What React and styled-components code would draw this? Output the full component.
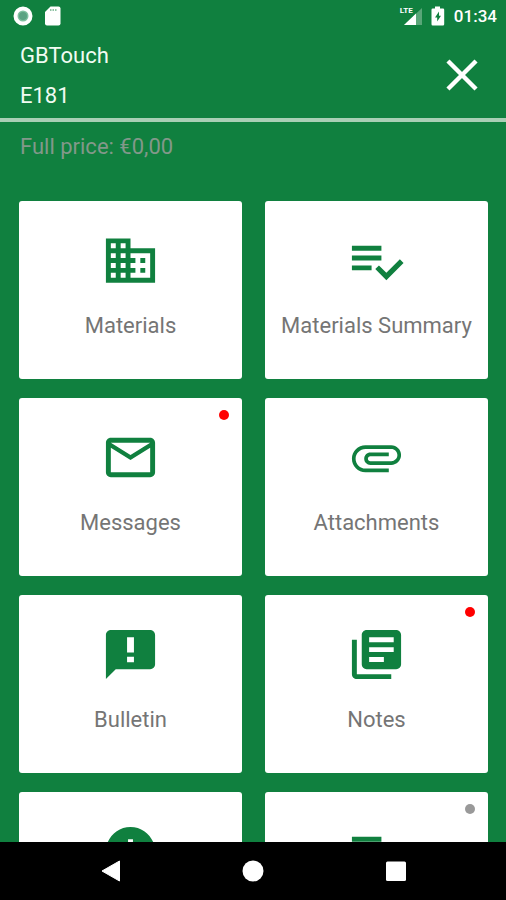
import React from 'react';
import styled, { createGlobalStyle } from 'styled-components';
import { MdDomain, MdInfo, MdLibraryBooks, MdMailOutline } from 'react-icons/md';

const CloseIcon = ({ size }) => (
  <svg width={size} height={size} viewBox="0 0 24 24" fill="none">
    <path
      d="M6 6l12 12M18 6L6 18"
      stroke="currentColor"
      strokeWidth="2.1"
      strokeLinecap="square"
      strokeLinejoin="round"
    />
  </svg>
);

const PlaylistIcon = ({ size }) => (
  <svg width={size} height={size} viewBox="0 0 24 24" fill="currentColor">
    <path d="M14 10H2v2h12v-2zm0-4H2v2h12V6zM2 16h8v-2H2v2zm19.5-4.5L23 13l-6.99 7-4.51-4.5L13 14l3.01 3 5.49-5.5z" />
  </svg>
);

const AttachmentIcon = ({ size }) => (
  <svg width={size} height={size} viewBox="0 0 24 24" fill="currentColor">
    <path d="M7.5 18C4.46 18 2 15.54 2 12.5S4.46 7 7.5 7H18c2.21 0 4 1.79 4 4s-1.79 4-4 4H9.5C8.12 15 7 13.88 7 12.5S8.12 10 9.5 10H17v1.5H9.5c-.55 0-1 .45-1 1s.45 1 1 1H18c1.38 0 2.5-1.12 2.5-2.5S19.38 8.5 18 8.5H7.5c-2.21 0-4 1.79-4 4s1.79 4 4 4H17V18H7.5z" />
  </svg>
);

const BulletinIcon = ({ size }) => (
  <svg width={size} height={size} viewBox="0 0 24 24" fill="currentColor">
    <path d="M20 2H4c-1.1 0-2 .9-2 2v18l4-4h14c1.1 0 2-.9 2-2V4c0-1.1-.9-2-2-2zm-6.6 9.2h-2.8V5h2.8v6.2zm0 4h-2.8v-2.3h2.8v2.3z" />
  </svg>
);

const tiles = [
  { label: 'Materials', icon: MdDomain },
  { label: 'Materials Summary', icon: PlaylistIcon },
  { label: 'Messages', icon: MdMailOutline, dot: '#ff0000' },
  { label: 'Attachments', icon: AttachmentIcon },
  { label: 'Bulletin', icon: BulletinIcon },
  { label: 'Notes', icon: MdLibraryBooks, dot: '#ff0000' },
  { label: '', name: 'Info', icon: MdInfo },
  { label: '', name: 'List', icon: PlaylistIcon, dot: '#999999' },
];

const StatusBar = () => (
  <StatusRow>
    <StatusGroup $gap="11px">
      <svg width="20" height="20" viewBox="0 0 20 20">
        <circle cx="10" cy="10" r="7.5" fill="#7fc0a0" stroke="#fff" strokeWidth="4" />
        <circle cx="10" cy="10" r="4" fill="#5ba383" />
      </svg>
      <svg width="18" height="20" viewBox="0 0 18 20">
        <path d="M6.5.5h8a2 2 0 0 1 2 2v15a2 2 0 0 1-2 2H3a2 2 0 0 1-2-2V6z" fill="#fff" />
        <path d="M6 3h1.5v2H6zM8.5 3H10v2H8.5zM11 3h1.5v2H11z" fill="#8fc3a4" />
      </svg>
    </StatusGroup>
    <StatusGroup $gap="9px">
      <Signal>
        <SignalType>LTE</SignalType>
        <svg width="22" height="20" viewBox="0 0 22 20">
          <path d="M22 2v17H4z" fill="#59a678" />
          <path d="M16 7.5V19H4z" fill="#fff" />
        </svg>
      </Signal>
      <svg width="14" height="20" viewBox="0 0 14 20">
        <path
          d="M4 .5h5v2h3a1.2 1.2 0 0 1 1.2 1.2v14.6a1.2 1.2 0 0 1-1.2 1.2H1.7a1.2 1.2 0 0 1-1.2-1.2V3.7a1.2 1.2 0 0 1 1.2-1.2H4z"
          fill="#fff"
        />
        <path d="M8 5.5v4.2h2l-3.8 5.8v-4H4z" fill="#10803f" />
      </svg>
      <Clock>01:34</Clock>
    </StatusGroup>
  </StatusRow>
);

const Tile = ({ label, name, icon: Icon, dot }) => (
  <TileButton type="button" aria-label={label || name}>
    <Icon size={59} />
    {label && <TileLabel>{label}</TileLabel>}
    {dot && <Dot $color={dot} />}
  </TileButton>
);

const App = () => {
  return (
    <Screen>
      <GlobalStyle />
      <StatusBar />
      <Header>
        <Titles>
          <Title>GBTouch</Title>
          <Title>E181</Title>
        </Titles>
        <CloseButton type="button" aria-label="Close">
          <CloseIcon size={50} />
        </CloseButton>
      </Header>
      <Content>
        <Price>Full price: €0,00</Price>
        <Grid>
          {tiles.map((tile) => (
            <Tile key={tile.label || tile.name} {...tile} />
          ))}
        </Grid>
      </Content>
      <NavBar>
        <NavButton type="button" aria-label="Back">
          <svg width="22" height="22" viewBox="0 0 22 22">
            <path d="M20.5 1v20L3 11z" fill="#fff" stroke="#fff" strokeLinejoin="round" />
          </svg>
        </NavButton>
        <NavButton type="button" aria-label="Home">
          <svg width="22" height="22" viewBox="0 0 22 22">
            <circle cx="11" cy="11" r="10.5" fill="#fff" />
          </svg>
        </NavButton>
        <NavButton type="button" aria-label="Recent apps">
          <svg width="22" height="22" viewBox="0 0 22 22">
            <rect x="1" y="1.5" width="20" height="19.5" rx="1.5" fill="#fff" />
          </svg>
        </NavButton>
      </NavBar>
    </Screen>
  );
};

const GlobalStyle = createGlobalStyle`
  * {
    box-sizing: border-box;
  }

  body {
    margin: 0;
    background: #10803f;
    font-family: Roboto, 'Liberation Sans', sans-serif;
  }

  button {
    margin: 0;
    padding: 0;
    border: 0;
    background: none;
    font: inherit;
    cursor: pointer;
  }

  svg {
    display: block;
  }
`;

const Screen = styled.div`
  display: flex;
  flex-direction: column;
  height: 100vh;
  overflow: hidden;
  background: #10803f;
`;

const StatusRow = styled.div`
  display: flex;
  align-items: center;
  justify-content: space-between;
  flex-shrink: 0;
  height: 31px;
  padding: 0 9px 0 13px;
`;

const StatusGroup = styled.div`
  display: flex;
  align-items: center;
  gap: ${(props) => props.$gap};
`;

const Signal = styled.div`
  position: relative;
`;

/* network type sits over the empty corner of the signal triangle */
const SignalType = styled.span`
  position: absolute;
  top: 0;
  left: 0;
  color: #fff;
  font-size: 8px;
  font-weight: 700;
  line-height: 10px;
`;

const Clock = styled.span`
  color: #fff;
  font-size: 17px;
  font-weight: 500;
  line-height: 20px;
`;

const Header = styled.header`
  display: flex;
  align-items: center;
  justify-content: space-between;
  flex-shrink: 0;
  height: 91px;
  padding: 0 19px 0 20px;
  border-bottom: 4px solid #a9cfb5;
`;

const Titles = styled.div`
  display: flex;
  flex-direction: column;
  padding-top: 2px;
`;

const Title = styled.span`
  color: #f1fbf2;
  font-size: 22px;
  line-height: 40px;
`;

const CloseButton = styled.button`
  color: #fff;
`;

const Content = styled.main`
  flex: 1;
  min-height: 0;
  overflow-y: auto;
  scrollbar-width: none;
`;

const Price = styled.p`
  margin: 0;
  padding: 10px 20px 39px;
  color: #82988a;
  font-size: 22px;
  line-height: 30px;
`;

const Grid = styled.div`
  display: grid;
  grid-template-columns: repeat(2, 1fr);
  gap: 19px 23px;
  padding: 0 18px 19px 19px;
`;

const TileButton = styled.button`
  position: relative;
  display: flex;
  flex-direction: column;
  align-items: center;
  gap: 21px;
  height: 178px;
  padding-top: 30px;
  border-radius: 3px;
  background: #fff;
  color: #10803f;
`;

const TileLabel = styled.span`
  color: #757575;
  font-size: 22px;
  line-height: 30px;
  white-space: nowrap;
`;

const Dot = styled.span`
  position: absolute;
  top: 12px;
  right: 13px;
  width: 10px;
  height: 10px;
  border-radius: 50%;
  background: ${(props) => props.$color};
`;

const NavBar = styled.nav`
  display: flex;
  align-items: center;
  justify-content: center;
  gap: 121px;
  flex-shrink: 0;
  height: 58px;
  background: #000;
`;

const NavButton = styled.button`
  width: 22px;
  height: 22px;
`;

export default App;
